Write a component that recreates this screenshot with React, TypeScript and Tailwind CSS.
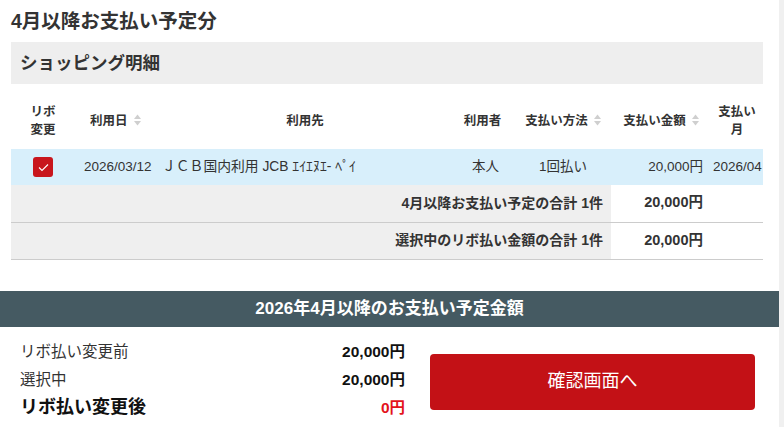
import type { ReactNode } from "react";

function SortIcon() {
  return (
    <svg width="7" height="12" viewBox="0 0 7 12" className="ml-[6px] inline-block align-[-1px]">
      <path d="M0 5 L3.5 0.5 L7 5 Z" fill="#cfcfcf" />
      <path d="M0 7 L3.5 11.5 L7 7 Z" fill="#cfcfcf" />
    </svg>
  );
}

function Th({ children, className = "" }: { children: ReactNode; className?: string }) {
  return (
    <th className={`text-[12.5px] font-bold leading-[18px] text-[#333] align-middle ${className}`}>
      {children}
    </th>
  );
}

function CheckBox() {
  return (
    <span className="mx-auto flex h-[20px] w-[20px] items-center justify-center rounded-[3px] bg-[#c8161d]">
      <svg width="11" height="9" viewBox="0 0 11 9">
        <path d="M1 4.5 L4 7.5 L10 1.5" fill="none" stroke="#fff" strokeWidth="1.1" />
      </svg>
    </span>
  );
}

export default function App() {
  return (
    <div className="flex h-[427px] w-full overflow-hidden bg-white font-[family-name:Liberation_Sans,Noto_Sans_CJK_JP,sans-serif] text-[#333]">
      <main className="flex w-[779px] flex-col">
        <div className="ml-[11px] w-[752px]">
          <h1 className="pt-[8px] text-[19.5px] font-bold leading-[26px] text-[#333]">
            4月以降お支払い予定分
          </h1>
          <div className="mt-[8px] flex h-[42px] items-center bg-[#eeeeee] pl-[9px]">
            <h2 className="text-[17.5px] font-bold text-[#333]">ショッピング明細</h2>
          </div>

          <table className="mt-[8px] w-[752px] table-fixed border-collapse">
            <colgroup>
              <col className="w-[64px]" />
              <col className="w-[85px]" />
              <col className="w-[290px]" />
              <col className="w-[65px]" />
              <col className="w-[96px]" />
              <col className="w-[100px]" />
              <col className="w-[52px]" />
            </colgroup>
            <thead>
              <tr className="h-[57px]">
                <Th className="text-center">
                  リボ
                  <br />
                  変更
                </Th>
                <Th className="pl-[15px] text-left">
                  利用日
                  <SortIcon />
                </Th>
                <Th className="text-center">利用先</Th>
                <Th className="text-center">利用者</Th>
                <Th className="text-center">
                  支払い方法
                  <SortIcon />
                </Th>
                <Th className="text-center">
                  支払い金額
                  <SortIcon />
                </Th>
                <Th className="text-center">
                  支払い
                  <br />
                  月
                </Th>
              </tr>
            </thead>
            <tbody className="text-[13.5px]">
              <tr className="h-[36px] bg-[#d8effb]">
                <td>
                  <CheckBox />
                </td>
                <td className="pl-[9px] whitespace-nowrap">2026/03/12</td>
                <td className="pl-[2px] whitespace-nowrap text-[13.8px]">ＪＣＢ国内利用 JCB ｴｲｴﾇｴ- ﾍﾟｲ</td>
                <td className="pl-[6px] text-center">本人</td>
                <td className="text-center">1回払い</td>
                <td className="pr-[8px] text-right">20,000円</td>
                <td className="pl-[2px] whitespace-nowrap">2026/04</td>
              </tr>
              <tr className="h-[37px] border-b border-[#cccccc]">
                <td colSpan={5} className="bg-[#efefef] pr-[8px] text-right text-[14px] font-bold">
                  4月以降お支払い予定の合計 1件
                </td>
                <td className="pr-[8px] text-right text-[14.5px] font-bold">20,000円</td>
                <td />
              </tr>
              <tr className="h-[37px] border-b border-[#cccccc]">
                <td colSpan={5} className="bg-[#efefef] pr-[8px] text-right text-[14px] font-bold">
                  選択中のリボ払い金額の合計 1件
                </td>
                <td className="pr-[8px] text-right text-[14.5px] font-bold">20,000円</td>
                <td />
              </tr>
            </tbody>
          </table>
        </div>

        <div className="mt-[31px] flex h-[36px] items-center justify-center bg-[#455a62]">
          <h2 className="text-[17px] font-bold text-white">2026年4月以降のお支払い予定金額</h2>
        </div>

        <div className="flex items-start pl-[20px] pr-[24px]">
          <div className="w-[385px] pt-[11px]">
            <div className="flex h-[28px] items-center justify-between text-[15.5px]">
              <span>リボ払い変更前</span>
              <span className="font-bold text-[#111]">20,000円</span>
            </div>
            <div className="flex h-[28px] items-center justify-between text-[15.5px]">
              <span>選択中</span>
              <span className="font-bold text-[#111]">20,000円</span>
            </div>
            <div className="flex h-[28px] items-center justify-between">
              <span className="text-[18px] font-bold text-[#111]">リボ払い変更後</span>
              <span className="text-[15.5px] font-bold text-[#e3131b]">0円</span>
            </div>
          </div>
          <button className="ml-[25px] mt-[27px] flex h-[56px] flex-1 items-center justify-center rounded-[4px] bg-[#c31116] text-[18px] text-white">
            確認画面へ
          </button>
        </div>
      </main>
      <div className="w-[5px] bg-[#f0f0f0]" />
    </div>
  );
}
